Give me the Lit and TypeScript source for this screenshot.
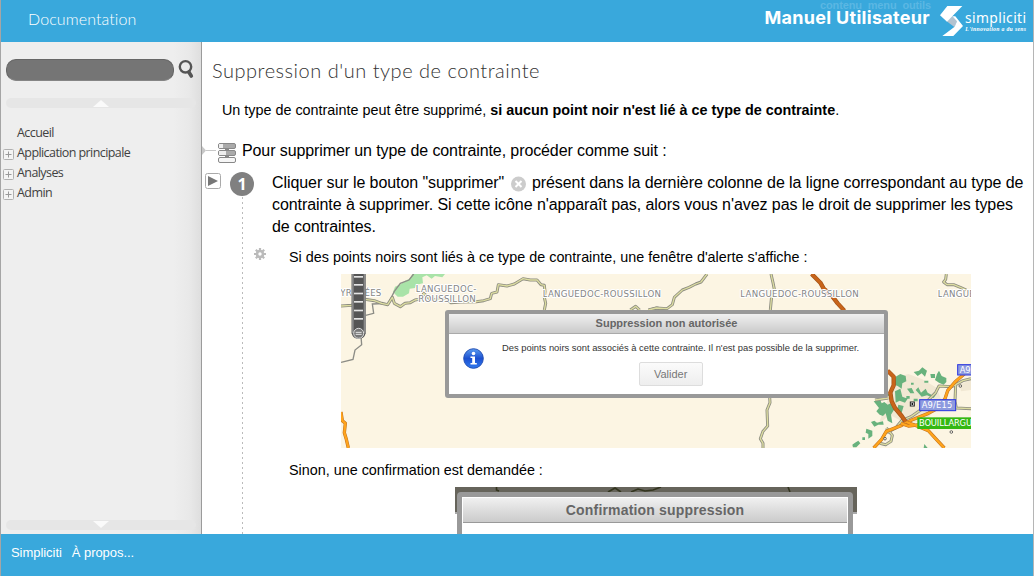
import { LitElement, html, css, svg } from "lit";
import { customElement, property } from "lit/decorators.js";

/** Map extract shown behind the alert window. */
@customElement("map-view")
class MapView extends LitElement {
  static styles = css`
    :host { display: block; width: 630px; height: 174px; }
    svg { display: block; }
    .edge { fill: none; stroke: #8c8c80; stroke-width: 9; stroke-linejoin: round; }
    .fill { fill: none; stroke: #dcdca0; stroke-width: 4; stroke-linejoin: round; }
    .border { fill: none; stroke: #8c8c86; stroke-width: 4; }
    .region { font: 26px "DejaVu Sans", sans-serif; fill: #858585; stroke: #fff; stroke-width: 6; stroke-linejoin: round; paint-order: stroke; }
    .badge { font: 25px "DejaVu Sans", sans-serif; fill: #fff; }
    .motor-edge { fill: none; stroke: #bf7020; stroke-width: 10; stroke-linejoin: round; }
    .motor { fill: none; stroke: #ffa41c; stroke-width: 7; stroke-linejoin: round; }
    .trunk { fill: none; stroke: #a35318; stroke-width: 13; stroke-linejoin: round; }
    .trunk-fill { fill: none; stroke: #c8641a; stroke-width: 9; stroke-linejoin: round; }
  `;

  road(d: string) {
    return svg`<path class="edge" d=${d}/><path class="fill" d=${d}/>`;
  }
  motorway(d: string) {
    return svg`<path class="motor-edge" d=${d}/><path class="motor" d=${d}/>`;
  }
  trunk(d: string) {
    return svg`<path class="trunk" d=${d}/><path class="trunk-fill" d=${d}/>`;
  }

  render() {
    const ticks = [26, 50, 76, 101, 127, 152];
    return html`<svg width="630" height="174" viewBox="0 0 630 174">
      <rect width="630" height="174" fill="#fcf5e3"/>
      <g transform="translate(-6 -6) scale(.33333)">
        <path fill="#a9e3a8" d="M232 18H330L322 28 300 24 290 32 275 22 262 28 264 46 244 50 240 60 224 62 222 76 204 86 188 86 174 72 180 56 198 48 210 38 224 32Z"/>
        <path class="border" d="M236 18 222 36 196 46 178 70 160 106 112 108 116 136 92 142M78 205 80 230 60 246 54 274 18 283"/>
        ${this.road("M18 114 50 112 64 104 90 94 118 98 140 106 158 110 172 88 178 106 196 116 210 106 226 104 240 96 260 92 266 76 284 92 304 96 330 92 348 104 376 102 424 101 446 98 466 92 470 76 486 72 490 50 516 54 538 48 564 32 586 36 606 36 618 50 628 52 630 70 628 88 632 106 628 126")}
        ${this.road("M886 126 902 115 914 126M944 126 966 120 990 126")}
        ${this.motorway("M18 432 22 458 31 466 28 494 34 514 40 540")}
        <text class="region" x="0" y="85" textLength="139">PYRÉNÉES</text>
        <text class="region" x="242" y="71" textLength="182">LANGUEDOC-</text>
        <text class="region" x="250" y="101" textLength="172">ROUSSILLON</text>
        <text class="region" x="623" y="86" textLength="355">LANGUEDOC-ROUSSILLON</text>
        <path fill="#555" d="M50 10H92V196Q88 213 71 213 54 213 50 196Z"/>
        <path fill="#8a8a8a" d="M50 10H56V196H50ZM86 10H92V196H86Z"/>
        ${ticks.map((y) => svg`<rect x="57" y=${y - 2} width="27" height="5" fill="#e4e4e4"/>`)}
        <circle cx="71" cy="196" r="15" fill="#777" stroke="#ddd" stroke-width="3"/>
        <path stroke="#e8e8e8" stroke-width="3" d="M62 193H80M62 199H80"/>
      </g>
      <g transform="translate(304 -6) scale(.33333)">
        ${this.road("M186 18 168 42 152 48 132 58 112 66 88 88 82 110 66 122 34 120 10 126")}
        ${this.road("M378 18 384 44 388 64 380 84 376 126")}
        ${this.road("M374 388 375 404 366 426 368 474 354 490 346 512 354 526 354 540")}
        ${this.road("M904 18 902 34 896 42 906 50 926 50 946 58 964 66")}
        ${this.trunk("M500 18 526 44 536 62 558 80 578 106 598 128")}
        <path fill="#f1e8d3" d="M756 328 790 318 832 334 876 360 890 400 850 450 790 470 734 440 700 470 730 390ZM944 350 980 334V366L948 370Z"/>
        <path fill="#68b27d" d="M752 326 766 318 782 324 784 340 772 346 770 362 758 354 748 350ZM806 312 822 308 832 298 846 308 840 326 830 316 818 324ZM876 318 882 308 890 324 904 330 904 342 896 350 882 344 870 336ZM856 318H870V330H858ZM786 362 800 360 808 376 796 376ZM812 366 820 358 828 374 842 362 848 374 862 382 872 370 876 376 866 390 846 382 830 386ZM750 370 766 362 772 386 788 392 780 404 764 398 752 404ZM686 400 706 396 710 406 718 402 728 410 740 404 748 424 738 440 742 466 728 458 722 436 714 444 704 440 694 430 702 420ZM760 410 776 414 770 434 756 428ZM678 462 688 458 696 464 714 460 716 470 700 470 688 476ZM664 482 682 488 682 504 670 512 670 498 662 494ZM622 530 630 524 640 518 646 526 634 538 624 538ZM838 528 848 540H836ZM830 404 846 400 844 414 830 418ZM784 384H794V392H784ZM806 392H818V400H806ZM838 338H850V344H838ZM724 380 734 376V386ZM652 508H660V516H652ZM798 344H806V350H798Z"/>
        ${this.road("M690 396 730 390M724 480 742 502 738 520 722 530 704 526M726 494 752 480 770 458 798 446 830 424 850 396 872 374 882 354 920 356 932 350 930 400 934 420 978 422M932 350 954 338 978 332")}
        ${this.trunk("M728 308 746 326 746 352 736 374 740 400 750 420 770 444 784 464")}
        ${this.motorway("M686 540 710 514 724 490 770 472 800 456 850 436 880 420 900 392 908 368 930 342 962 314 978 308")}
        ${this.motorway("M784 462 816 474 850 488 872 512 898 540M768 466 790 474 826 470")}
        <g fill="none" stroke="#666" stroke-width="3">
          <circle cx="946" cy="354" r="4"/><circle cx="919" cy="492" r="4"/><circle cx="720" cy="512" r="4"/>
        </g>
        <rect x="796" y="402" width="12" height="12" fill="#fff" stroke="#222" stroke-width="3"/>
        <circle cx="802" cy="408" r="3"/>
        <text class="region" x="286" y="86" textLength="355">LANGUEDOC-ROUSSILLON</text>
        <text class="region" x="878" y="86" textLength="355">LANGUEDOC-ROUSSILLON</text>
        <rect x="938" y="290" width="60" height="31" fill="#8d9adf" stroke="#2a35e0" stroke-width="3"/>
        <text class="badge" x="944" y="315">A9</text>
        <rect x="824" y="395" width="108" height="33" fill="#8d9adf" stroke="#2a35e0" stroke-width="3"/>
        <text class="badge" x="830" y="420" textLength="92">A9/E15</text>
        <rect x="817" y="448" width="190" height="35" fill="#35b812"/>
        <text class="badge" x="822" y="474" textLength="190">BOUILLARGUES</text>
      </g>
    </svg>`;
  }
}

/** Collapsible entry of the table of contents. */
@customElement("menu-entry")
class MenuEntry extends LitElement {
  @property() label = "";
  @property({ type: Boolean }) leaf = false;
  static styles = css`
    :host { display: flex; align-items: center; height: 20px; }
    .box { width: 11px; height: 11px; margin: 3px 3px 0 2px; flex: none; }
    .label { font: 12.5px/20px "Open Sans", sans-serif; letter-spacing: -0.58px; color: #414141; white-space: nowrap; }
  `;
  render() {
    return html`<svg class="box" viewBox="0 0 11 11">${this.leaf ? "" : svg`<rect x=".5" y=".5" width="10" height="10" rx="1" fill="#f4f4f4" stroke="#b0b0b0"/><path d="M2.5 5.5H8.5M5.5 2.5V8.5" stroke="#999"/>`}</svg><span class="label">${this.label}</span>`;
  }
}

@customElement("app-root")
class AppRoot extends LitElement {
  static styles = css`
    :host { display: flex; flex-direction: column; box-sizing: border-box; width: 1034px; height: 576px; overflow: hidden;
      border-left: 1px solid #a5a5a5; border-right: 1px solid #b5b5b5; background: #fff; color: #000;
      font-family: "Liberation Sans", Arial, sans-serif; white-space: nowrap; }
    svg { display: block; flex: none; }
    .header { display: flex; flex: none; height: 42px; background: #39a8dc; color: #fff; position: relative; }
    .doc { margin-left: 27px; font: 300 16px/37px Lato, sans-serif; letter-spacing: 0.1px; flex: 1; }
    .manual { font: 700 18px/36px Inter, sans-serif; letter-spacing: 0.3px; margin-right: 9px; position: relative; }
    .ghost { position: absolute; left: 819px; top: -2px; font: bold 11px/14px "Liberation Sans", sans-serif; color: #5bb7e3; word-spacing: 3px; letter-spacing: -0.14px; }
    .logo-name { font: 57px "Noto Sans", sans-serif; fill: #fff; }
    .logo-tag { font: italic bold 17px "Liberation Serif", serif; fill: #fff; }
    .body { display: flex; flex: 1; min-height: 0; }
    .side { display: flex; flex-direction: column; box-sizing: border-box; width: 201px; border-right: 1px solid #9b9b9b;
      background: linear-gradient(90deg, #eee 172px, #e9e9e9 188px, #dedede 200px); }
    .search { display: flex; margin: 17px 0 0 5px; gap: 3px; height: 24px; }
    .field { box-sizing: border-box; width: 168px; height: 22px; border-radius: 10px; background: #757575; border: 1px solid #666; border-bottom-color: #858585; }
    .strip { display: flex; justify-content: center; align-items: center; flex: none; width: 190px; height: 10px; margin-left: 5px; border-radius: 5px; background: #e6e6e6; }
    .top { margin-top: 15px; }
    .menu { flex: 1; padding-top: 15px; }
    .bottom { margin-bottom: 4px; }
    .main { display: flex; flex-direction: column; flex: 1; min-width: 0; overflow: hidden; }
    .title { margin: 0 0 0 10px; height: 56px; font: 300 20px/56px Lato, sans-serif; letter-spacing: 0.52px; color: #333; }
    .intro { margin: 0 0 0 20px; font-size: 14.37px; line-height: 24px; }
    .procedure { display: flex; align-items: center; margin-top: 17px; height: 24px; font-size: 16px; letter-spacing: -0.1px; }
    .icon { margin-right: 5px; }
    .step { display: flex; flex: 1; margin-top: 9px; }
    .rail { display: flex; align-items: flex-start; width: 70px; gap: 9px; box-sizing: border-box; padding-left: 3px; flex: none; background: repeating-linear-gradient(#bbb 0 2px, transparent 2px 5px) 40px 25px / 1px 400px no-repeat; }
    .play { margin-top: 1px; }
    .number { width: 24px; height: 24px; border-radius: 50%; background: #808080; color: #fff; font: bold 16px/24px "Open Sans", sans-serif; text-align: center; }
    .content { width: 761px; }
    .text { font-size: 16px; line-height: 22px; height: 66px; letter-spacing: -0.072px; }
    .cross { display: inline-block; vertical-align: -4px; margin: 0 1px 0 1px; }
    .note { display: flex; align-items: center; height: 16px; margin: 11px 0 9px -18px; font-size: 14.37px; gap: 23px; }
    .gear { margin-top: -6px; }
    .shot { position: relative; width: 630px; height: 174px; margin-left: 69px; }
    .dialog { position: absolute; left: 104px; top: 36px; width: 443px; height: 88px; box-sizing: border-box; border: 4px solid #999; border-radius: 3px; background: #fff; }
    .bar { height: 19px; border-bottom: 1px solid #aaa; background: linear-gradient(#f0f0f0, #cacaca); text-align: center; font: bold 11px/19px "Liberation Sans", sans-serif; color: #666; }
    .message { display: flex; padding: 4px 0 0 14px; gap: 18px; }
    .info { margin-top: 10px; }
    .words { display: flex; flex-direction: column; align-items: center; font-size: 9.4px; line-height: 20px; color: #333; }
    .button { box-sizing: border-box; width: 64px; height: 24px; margin: 4px 20px 0 0; border: 1px solid #ddd; border-radius: 2px; background: linear-gradient(#fbfbfb, #eee); font-size: 11px; line-height: 22px; text-align: center; color: #777; }
    .else { margin: 14px 0 9px 17px; font-size: 14.37px; line-height: 16px; }
    .shade { box-sizing: border-box; width: 402px; height: 27px; margin-left: 183px; padding: 5px 0 0 2px; background: #66645b; border-bottom: 2px solid #aaa; position: relative; }
    .trace { position: absolute; left: 0; top: 0; }
    .confirm { position: relative; box-sizing: border-box; width: 396px; height: 60px; border: 5px solid #999; border-radius: 4px 4px 0 0; background: #fff; padding: 1px 1px 0; }
    .confirm-bar { height: 24px; border-bottom: 1px solid #999; background: linear-gradient(#f0f0f0, #cbcbcb); text-align: center; font: bold 14px/25px "Liberation Sans", sans-serif; letter-spacing: 0.17px; color: #666; }
    .footer { display: flex; flex: none; height: 42px; padding-left: 10px; gap: 10px; background: #39a8dc; color: #fff; font-size: 13px; letter-spacing: -0.05px; line-height: 37px; box-sizing: border-box; }
  `;

  logo() {
    return html`<svg width="94" height="42" viewBox="-3 0 282 126">
      <path fill="#b3c3d0" d="M20 64 37 49 52 62 44 82Z"/>
      <path fill="#fff" d="M22 18H67L37 49 21 65 0 46ZM37 49 46 49 69 78 40 108H7L44 80 51 64Z"/>
      <text class="logo-name" transform="translate(75 69) scale(.73 .73)" textLength="251">simpliciti</text>
      <text class="logo-tag" x="76" y="92" textLength="182">L'innovation a du sens</text>
    </svg>`;
  }

  render() {
    return html`
      <div class="header">
        <div class="ghost">contenu menu outils</div>
        <div class="doc">Documentation</div>
        <div class="manual">Manuel Utilisateur</div>
        ${this.logo()}
      </div>
      <div class="body">
        <div class="side">
          <div class="search">
            <div class="field"></div>
            <svg width="18" height="22" viewBox="0 0 18 22"><circle cx="8.5" cy="7.8" r="5.7" fill="none" stroke="#555" stroke-width="2.4"/><path d="M11.8 13 14.3 17" stroke="#555" stroke-width="3.6" stroke-linecap="round"/></svg>
          </div>
          <div class="strip top"><svg width="16" height="8" viewBox="0 0 16 8"><path d="M0 8 8 1 16 8Z" fill="#fafafa"/></svg></div>
          <div class="menu">
            <menu-entry label="Accueil" leaf></menu-entry>
            <menu-entry label="Application principale"></menu-entry>
            <menu-entry label="Analyses"></menu-entry>
            <menu-entry label="Admin"></menu-entry>
          </div>
          <div class="strip bottom"><svg width="16" height="8" viewBox="0 0 16 8"><path d="M0 0 8 7 16 0Z" fill="#fafafa"/></svg></div>
        </div>
        <div class="main">
          <h1 class="title">Suppression d'un type de contrainte</h1>
          <p class="intro">Un type de contrainte peut être supprimé, <b>si aucun point noir n'est lié à ce type de contrainte</b>.</p>
          <div class="procedure">
            <svg class="icon" width="35" height="24" viewBox="0 0 35 24">
              <path d="M0 7 4 11.500 0 16Z" fill="#c8c8c8"/><path d="M4 11.500H14" stroke="#c8c8c8"/>
              <path d="M25 6V20" stroke="#888" stroke-width="4"/>
              <g stroke="#888"><rect x="16.500" y="4.500" width="17" height="5" rx="1.500" fill="#aaa"/><rect x="16.500" y="11.500" width="17" height="5" rx="1.500" fill="#aaa"/><rect x="16.500" y="18.500" width="17" height="5" rx="1.500" fill="#f6f6f6"/></g>
              <path d="M17 5H21V9H17ZM17 12H24V16H17Z" fill="#eee"/>
            </svg>
            <span>Pour supprimer un type de contrainte, procéder comme suit :</span>
          </div>
          <div class="step">
            <div class="rail">
              <svg class="play" width="16" height="16" viewBox="0 0 16 16"><rect x=".5" y=".5" width="15" height="15" rx="2" fill="#fff" stroke="#aaa"/><path d="M3 3 13 8 3 13Z" fill="#777"/></svg>
              <div class="number">1</div>
            </div>
            <div class="content">
              <div class="text">Cliquer sur le bouton "supprimer" <svg class="cross" width="17" height="16" viewBox="0 0 17 16"><circle cx="8.5" cy="8" r="7.5" fill="#ccc"/><path d="M5.5 5 11.5 11M11.5 5 5.5 11" stroke="#fff" stroke-width="2"/></svg> présent dans la dernière colonne de la ligne correspondant au type de<br>contrainte à supprimer. Si cette icône n'apparaît pas, alors vous n'avez pas le droit de supprimer les types<br>de contraintes.</div>
              <div class="note">
                <svg class="gear" width="12" height="12" viewBox="0 0 12 12"><path d="M6 0V12M0 6H12M1.8 1.8 10.2 10.2M10.2 1.8 1.8 10.2" stroke="#bbb" stroke-width="2.2"/><circle cx="6" cy="6" r="3" fill="#fff" stroke="#bbb" stroke-width="2.6"/></svg>
                <span>Si des points noirs sont liés à ce type de contrainte, une fenêtre d'alerte s'affiche :</span>
              </div>
              <div class="shot">
                <map-view></map-view>
                <div class="dialog">
                  <div class="bar">Suppression non autorisée</div>
                  <div class="message">
                    <svg class="info" width="21" height="21" viewBox="0 0 21 21"><defs><linearGradient id="g" x2="0" y2="1"><stop stop-color="#5a9cf0"/><stop offset=".5" stop-color="#1c50d0"/><stop offset="1" stop-color="#2f7af0"/></linearGradient></defs><circle cx="10.5" cy="10.5" r="9.8" fill="url(#g)" stroke="#2450b4"/><circle cx="10.5" cy="5.5" r="1.8" fill="#fff"/><path d="M7.5 8.5H12V15H13.8V16.5H7.5V15H9.2V10H7.5Z" fill="#fff"/></svg>
                    <div class="words">
                      <span>Des points noirs sont associés à cette contrainte. Il n'est pas possible de la supprimer.</span>
                      <div class="button">Valider</div>
                    </div>
                  </div>
                </div>
              </div>
              <div class="else">Sinon, une confirmation est demandée :</div>
              <div class="shade">
                <svg class="trace" width="402" height="6" viewBox="0 0 402 6"><path d="M41.5 0V3L44 4M153 5 160 1 166 5M176 5 183 2 190 4 198 3 206 0M333 0 335 5" fill="none" stroke="#33351f" stroke-width="1.6"/></svg>
                <div class="confirm"><div class="confirm-bar">Confirmation suppression</div></div>
              </div>
            </div>
          </div>
        </div>
      </div>
      <div class="footer"><span>Simpliciti</span><span>À propos...</span></div>
    `;
  }
}
